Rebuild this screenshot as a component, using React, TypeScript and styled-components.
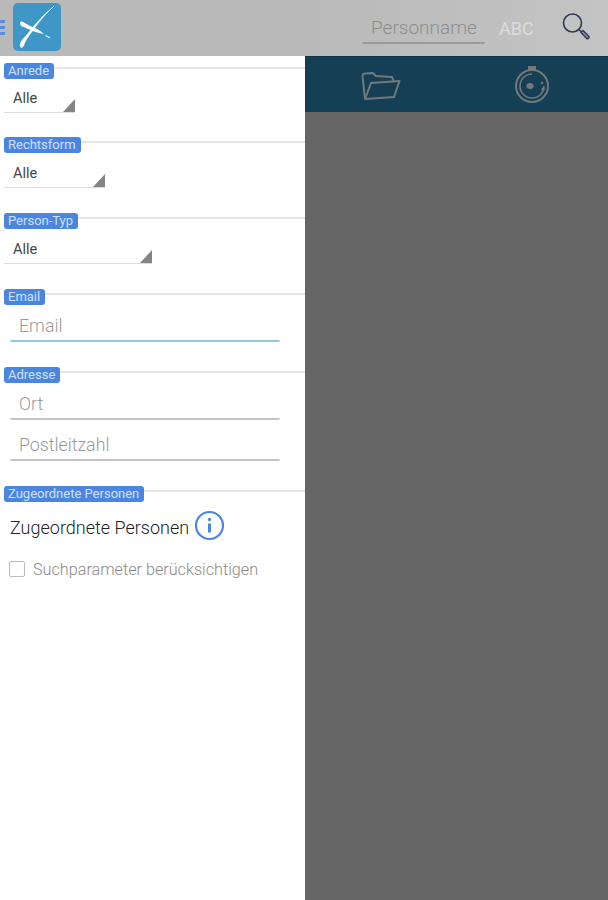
import React from "react";
import styled, { createGlobalStyle } from "styled-components";

const Global = createGlobalStyle`
  html, body, #root { margin: 0; height: 100%; }
  body { font-family: Roboto, "Liberation Sans", sans-serif; background: #fff; overflow: hidden; }
  * { box-sizing: border-box; }
`;
const Page = styled.div`display: flex; flex-direction: column; height: 900px; width: 608px;`;
const Header = styled.header`display: flex; height: 56px; background: linear-gradient(90deg, #b9b9b9 0 50%, #c4c4c4 100%); align-items: flex-start; flex: none;`;
const Burger = styled.div`width: 5px; height: 15px; margin-top: 20px; flex: none;
  background: repeating-linear-gradient(#5b8fdc 0 3px, transparent 3px 6px);`;
const Logo = styled.svg`width: 48px; height: 48px; margin: 3px 0 0 8px; flex: none;`;
const HeaderSearch = styled.div`flex: 1; display: flex; align-items: flex-start; justify-content: flex-end;`;
const NameField = styled.div`width: 123px; height: 29px; margin-top: 15px; padding: 2px 0 0 9px; font-size: 19px; font-weight: 300; line-height: 21px; color: #8e8e8e;
  border-bottom: 2px solid #9a9a9a; border-radius: 0 0 2px 2px; white-space: nowrap;`;
const AbcLabel = styled.div`margin: 18px 0 0 14px; width: 36px; font-size: 18px; line-height: 21px; color: #dcdcdc; font-weight: 400; white-space: nowrap;`;
const SearchIcon = styled.svg`width: 30px; height: 30px; margin: 12px 17px 0 26px; flex: none;`;
const Body = styled.div`display: flex; flex: 1; min-height: 0;`;
const Sidebar = styled.aside`width: 305px; flex: none; background: #fff; padding-top: 7px; display: flex; flex-direction: column;`;
const Section = styled.section<{ $height: number }>`height: ${p => p.$height}px; flex: none;`;
const SectionHead = styled.div`display: flex; align-items: flex-start; padding-left: 4px;`;
const Badge = styled.div`height: 16px; padding: 0 5px 0 4px; background: #4a86e0; color: #cfe0f8; border-radius: 3px; font-size: 13px; line-height: 16px; white-space: nowrap; flex: none;`;
const Rule = styled.div`flex: 1; height: 2px; margin-top: 4px; background: #e6e6e6;`;
const Select = styled.div<{ $width: number; $height: number }>`position: relative; width: ${p => p.$width}px; height: ${p => p.$height}px; margin: 0 0 0 4px; padding: ${p => p.$height - 24}px 0 0 9px;
  font-size: 14.5px; line-height: 20px; color: #444; border-bottom: 1px solid #dcdcdc;`;
const Arrow = styled.span`position: absolute; right: 0; bottom: 0; width: 12px; height: 13px; background: #858585; clip-path: polygon(100% 0, 100% 100%, 0 100%);`;
const Field = styled.div<{ $active?: boolean; $height: number }>`width: 270px; height: ${p => p.$height}px; margin-left: 10px; padding: 0 0 4px 9px; display: flex; align-items: flex-end;
  border-bottom: 2px solid ${p => (p.$active ? "#8acbe6" : "#c4c4c4")}; border-radius: 0 0 2px 2px; font-size: 17.8px; font-weight: 300; line-height: 20px; color: #9a9a9a;`;
const InfoRow = styled.div`display: flex; align-items: center; height: 34px; margin-top: 9px; padding-left: 10px; font-size: 18px; font-weight: 300; line-height: 20px; color: #222; white-space: nowrap;`;
const InfoIcon = styled.svg`width: 31px; height: 31px; margin: -6px 0 0 5px; flex: none;`;
const CheckRow = styled.label`display: flex; align-items: center; height: 18px; margin-top: 15px; padding-left: 9px; font-size: 16.2px; font-weight: 300; color: #8a8a8a; white-space: nowrap;`;
const CheckBox = styled.span`width: 16px; height: 16px; border: 1px solid #bbb; border-radius: 2px; margin-right: 8px; flex: none;`;
const Main = styled.main`flex: 1; background: #666; display: flex; flex-direction: column;`;
const TabBar = styled.nav`height: 56px; background: #143f55; border-top: 1px solid #0f2f4e; display: flex; flex: none;`;
const Tab = styled.div`flex: 1; display: flex; align-items: center; justify-content: center;`;
const TabIcon = styled.svg`width: 40px; height: 40px; flex: none;`;

function SearchGlyph() {
  return (
    <SearchIcon viewBox="0 0 30 30" fill="none">
      <circle cx="11.5" cy="11" r="9" stroke="#33384f" strokeWidth="1.6" />
      <path d="M18 17.5 L20.5 20" stroke="#33384f" strokeWidth="1.6" />
      <path d="M20 20.5 L22 18.5 L28 24.5 Q28.5 26.5 26 26.8 Z" fill="#8f93a3" stroke="#33384f" strokeWidth="1.4" strokeLinejoin="round" />
    </SearchIcon>
  );
}

export default function App() {
  return (
    <Page>
      <Global />
      <Header>
        <Burger />
        <Logo viewBox="0 0 48 48">
          <rect width="48" height="48" rx="5" fill="#3f97c8" />
          <path d="M41 3 Q31 12 23 23 Q17 31 13 37 Q11 41 10.5 43 Q8 46 7 43 Q7 39 10.5 35.5 Q15 31 20 24 Q30 12 41 3 Z" fill="#fff" stroke="#fff" strokeWidth=".6" strokeLinejoin="round" />
          <path d="M7 20 Q8 17.5 11 19.5 Q18 24 24 26 Q28 28 31 31 Q26 30 21 28.5 Q13 25 8 23 Z" fill="#fff" />
          <path d="M32.5 32.5 L37 35" stroke="#e4f2fa" strokeWidth="1.4" />
        </Logo>
        <HeaderSearch>
          <NameField>Personname</NameField>
          <AbcLabel>ABC</AbcLabel>
          <SearchGlyph />
        </HeaderSearch>
      </Header>
      <Body>
        <Sidebar>
          <Section $height={74}>
            <SectionHead><Badge>Anrede</Badge><Rule /></SectionHead>
            <Select $width={71} $height={34}>Alle<Arrow /></Select>
          </Section>
          <Section $height={76}>
            <SectionHead><Badge>Rechtsform</Badge><Rule /></SectionHead>
            <Select $width={101} $height={35}>Alle<Arrow /></Select>
          </Section>
          <Section $height={76}>
            <SectionHead><Badge>Person-Typ</Badge><Rule /></SectionHead>
            <Select $width={148} $height={35}>Alle<Arrow /></Select>
          </Section>
          <Section $height={78}>
            <SectionHead><Badge>Email</Badge><Rule /></SectionHead>
            <Field $active $height={37}>Email</Field>
          </Section>
          <Section $height={119}>
            <SectionHead><Badge>Adresse</Badge><Rule /></SectionHead>
            <Field $height={37}>Ort</Field>
            <Field $height={41}>Postleitzahl</Field>
          </Section>
          <Section $height={110}>
            <SectionHead><Badge>Zugeordnete Personen</Badge><Rule /></SectionHead>
            <InfoRow>
              Zugeordnete Personen
              <InfoIcon viewBox="0 0 31 31" fill="none">
                <circle cx="15.5" cy="15.5" r="13.5" stroke="#4a86e0" strokeWidth="2.2" />
                <circle cx="15.5" cy="9.5" r="1.7" fill="#4a86e0" />
                <path d="M15.5 13.5 V22.5" stroke="#4a86e0" strokeWidth="3" />
              </InfoIcon>
            </InfoRow>
            <CheckRow><CheckBox />Suchparameter berücksichtigen</CheckRow>
          </Section>
        </Sidebar>
        <Main>
          <TabBar>
            <Tab>
              <TabIcon viewBox="0 0 40 40" fill="none" stroke="#74787a" strokeWidth="2" strokeLinejoin="round">
                <path d="M4 34 L1.5 11 Q1.5 8.5 4 8.5 L12 8 L15 11 L31 12 L33 17" />
                <path d="M4 34 L10 18 L38.5 16 L33 32 Z" />
              </TabIcon>
            </Tab>
            <Tab>
              <TabIcon viewBox="0 0 40 40" fill="none" stroke="#74787a" strokeWidth="2">
                <circle cx="20" cy="21" r="16" />
                <path d="M20 9 A12 12 0 1 0 32 21" strokeWidth="1.6" />
                <path d="M17 5 V2 H23 V5" fill="#74787a" />
                <ellipse cx="18" cy="21" rx="3.6" ry="3" fill="#74787a" stroke="none" />
                <circle cx="31" cy="24" r="1.6" fill="#74787a" stroke="none" />
                <circle cx="30" cy="18" r="1.3" fill="#74787a" stroke="none" />
              </TabIcon>
            </Tab>
          </TabBar>
        </Main>
      </Body>
    </Page>
  );
}
